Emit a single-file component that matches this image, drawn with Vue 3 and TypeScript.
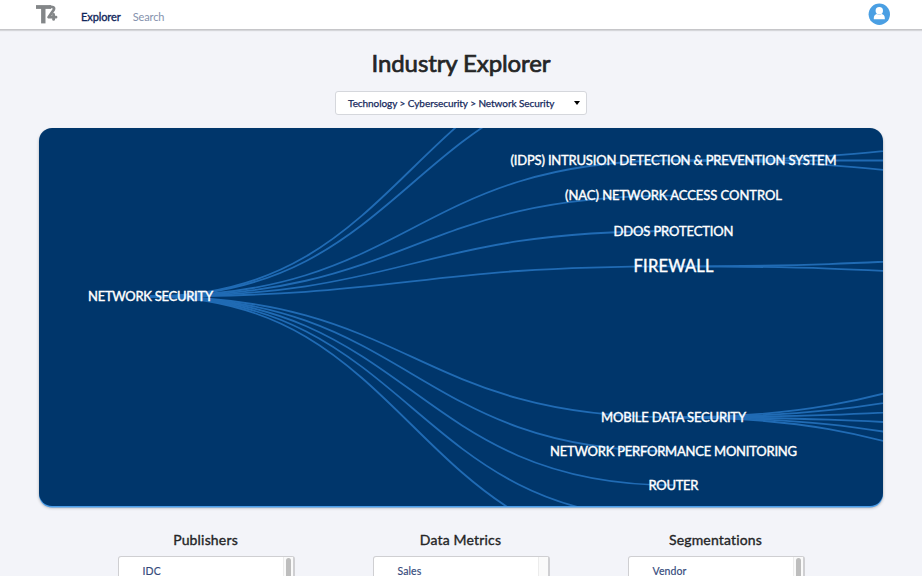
<script setup lang="ts">
interface TreeNode {
  label: string
  x: number
  y: number
  width: number
  size: number
}

interface Column {
  title: string
  item: string
  scrollable: boolean
}

const levelX: [number, number, number] = [111.5, 634.5, 1157.5]

const nodes: TreeNode[] = [
  { label: 'NETWORK SECURITY', x: 111.5, y: 168.5, width: 125, size: 13 },
  { label: '(IDPS) INTRUSION DETECTION & PREVENTION SYSTEM', x: 634.5, y: 32.5, width: 326, size: 13 },
  { label: '(NAC) NETWORK ACCESS CONTROL', x: 634.5, y: 67.6, width: 217, size: 13 },
  { label: 'DDOS PROTECTION', x: 634.5, y: 103, width: 120, size: 13 },
  { label: 'FIREWALL', x: 634.5, y: 138.3, width: 80, size: 16.5 },
  { label: 'MOBILE DATA SECURITY', x: 634.5, y: 289.3, width: 145, size: 13 },
  { label: 'NETWORK PERFORMANCE MONITORING', x: 634.5, y: 323.3, width: 247, size: 13 },
  { label: 'ROUTER', x: 634.5, y: 357.2, width: 50, size: 13 },
]

const branchTargets: number[] = [-87, -57.4, 32.5, 67.7, 103, 138.3, 289.3, 323.3, 357.2, 391, 426]

const leafTargets: { from: number; offsets: number[] }[] = [
  { from: 32.5, offsets: [-30, 0, 30] },
  { from: 138.3, offsets: [-14.5, 14.5] },
  { from: 289.3, offsets: [-76, -45.5, -15, 15, 45.5, 76] },
]

function curve(x0: number, y0: number, x1: number, y1: number): string {
  const mid = (x0 + x1) / 2
  return `M${x0},${y0}C${mid},${y0} ${mid},${y1} ${x1},${y1}`
}

const links: string[] = [
  ...branchTargets.map((y) => curve(levelX[0], 168.5, levelX[1], y)),
  ...leafTargets.flatMap(({ from, offsets }) =>
    offsets.map((o) => curve(levelX[1], from, levelX[2], from + o)),
  ),
]

const columns: Column[] = [
  { title: 'Publishers', item: 'IDC', scrollable: true },
  { title: 'Data Metrics', item: 'Sales', scrollable: false },
  { title: 'Segmentations', item: 'Vendor', scrollable: true },
]
</script>

<template>
  <div class="page">
    <header class="topbar">
      <svg class="logo" viewBox="0 0 22 20" width="22" height="20" aria-hidden="true">
        <path d="M0 2H15" fill="none" stroke="#838688" stroke-width="3.8" />
        <path d="M7.3 2V18.4" fill="none" stroke="#838688" stroke-width="4.4" />
        <path d="M14 1.8h1.6q3.6 .1 2 3.2L12.6 12.2H20" fill="none" stroke="#838688" stroke-width="2.8" stroke-linejoin="round" stroke-linecap="round" />
        <path d="M17.6 9.4V14.4" fill="none" stroke="#838688" stroke-width="2.8" stroke-linecap="round" />
      </svg>
      <nav class="nav">
        <a class="link active">Explorer</a>
        <a class="link">Search</a>
      </nav>
      <svg class="avatar" viewBox="0 0 22 22" width="22" height="22" aria-hidden="true">
        <circle cx="11.3" cy="11.3" r="10.7" fill="#4a9fe3" />
        <circle cx="11.3" cy="7.8" r="3.7" fill="#fff" />
        <path d="M5.8 16.2v-1.2c0-2.3 1.3-3.8 3.1-4.1 1.4 1.1 3.4 1.1 4.8 0 1.8.3 3.1 1.8 3.1 4.1v1.2z" fill="#fff" />
      </svg>
    </header>

    <main class="content">
      <h1 class="heading">Industry Explorer</h1>
      <button class="picker" type="button">
        <span class="picker-text">Technology &gt; Cybersecurity &gt; Network Security</span>
        <span class="caret"></span>
      </button>

      <section class="tree">
        <svg class="graph" viewBox="0 0 844 378" width="844" height="378">
          <path v-for="d in links" :key="d" class="edge" :d="d" />
          <text
            v-for="n in nodes"
            :key="n.label"
            class="label"
            :x="n.x - n.width / 2"
            :y="n.y + n.size * 0.36"
            :font-size="n.size"
            :textLength="n.width"
          >{{ n.label }}</text>
        </svg>
      </section>

      <section class="columns">
        <div v-for="c in columns" :key="c.title" class="column">
          <h2 class="column-title">{{ c.title }}</h2>
          <div class="list">
            <div class="item">{{ c.item }}</div>
            <div class="track"><div v-if="c.scrollable" class="thumb"></div></div>
          </div>
        </div>
      </section>
    </main>
  </div>
</template>

<style>
body {
  margin: 0;
  overflow: hidden;
  background: #f3f4f9;
}
</style>

<style scoped>
.page {
  width: 922px;
  height: 576px;
  overflow: hidden;
  background: #f3f4f9;
  font-family: Lato, "Liberation Sans", sans-serif;
}
.topbar {
  display: flex;
  box-sizing: border-box;
  height: 30px;
  padding: 4px 32px 0 36px;
  background: #fff;
  border-bottom: 1px solid #c6c6c9;
  box-shadow: 0 1px 1px rgba(0, 0, 0, 0.12);
}
.logo {
  margin-top: 1px;
}
.nav {
  display: flex;
  gap: 12px;
  margin-left: 23px;
  padding-top: 5px;
  font-size: 11px;
  line-height: 16px;
  letter-spacing: -0.1px;
}
.link {
  color: #8592ad;
}
.active {
  color: #11265b;
  -webkit-text-stroke: 0.35px #11265b;
}
.avatar {
  margin-left: auto;
  margin-top: -1px;
}
.content {
  display: flex;
  flex-direction: column;
  align-items: center;
}
.heading {
  margin: 17px 0 0;
  height: 32px;
  font-size: 24px;
  line-height: 32px;
  font-weight: 400;
  letter-spacing: -0.1px;
  color: #242526;
  -webkit-text-stroke: 0.7px #242526;
}
.picker {
  display: flex;
  align-items: center;
  justify-content: space-between;
  box-sizing: border-box;
  width: 252px;
  height: 24px;
  margin-top: 12px;
  padding: 0 6px 0 12px;
  border: 1px solid #d5d7dc;
  border-radius: 3px;
  background: #fff;
  color: #15295c;
  font-family: inherit;
  font-size: 10px;
  letter-spacing: -0.06px;
  -webkit-text-stroke: 0.25px #15295c;
}
.caret {
  border: 3.5px solid transparent;
  border-top: 4px solid #000;
  border-bottom: 0;
}
.tree {
  width: 844px;
  height: 378px;
  margin-top: 13px;
  border-radius: 13px;
  overflow: hidden;
  background: #00366b;
  box-shadow: 0 1.5px 0 #4b9eea, 0 2px 3px rgba(0, 0, 0, 0.3);
}
.graph {
  display: block;
}
.edge {
  fill: none;
  stroke: #206bb4;
  stroke-width: 1.8;
}
.label {
  fill: #fff;
  stroke: #fff;
  stroke-width: 0.4;
}
.columns {
  display: grid;
  grid-template-columns: repeat(3, 177px);
  column-gap: 78px;
  margin-top: 25px;
}
.column-title {
  margin: 0;
  height: 25px;
  padding-right: 1px;
  text-align: center;
  font-size: 14px;
  line-height: 18px;
  font-weight: 400;
  letter-spacing: 0.17px;
  color: #242526;
  -webkit-text-stroke: 0.35px #242526;
}
.list {
  display: flex;
  justify-content: space-between;
  box-sizing: border-box;
  height: 120px;
  border: 1px solid #cfcfd2;
  border-right-width: 2px;
  border-radius: 3px;
  background: #fff;
}
.item {
  padding: 6px 0 0 24px;
  font-size: 10.5px;
  line-height: 16px;
  letter-spacing: 0.1px;
  color: #34497a;
  -webkit-text-stroke: 0.15px #34497a;
}
.track {
  width: 9px;
  background: #fafafa;
  border-left: 1px solid #ececec;
}
.thumb {
  width: 5px;
  height: 90px;
  margin: 1px 0 0 2px;
  border-radius: 3px;
  background: #bdbdbd;
}
</style>
